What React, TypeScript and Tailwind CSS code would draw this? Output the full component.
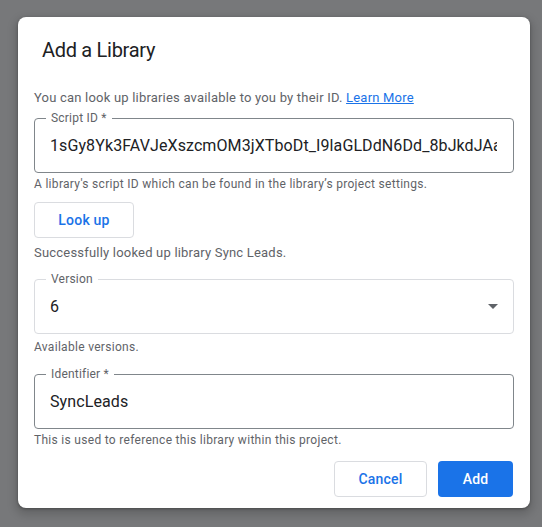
import React from "react";

function Outlined({
  label,
  dark,
  children,
  className = "",
}: {
  label: string;
  dark?: boolean;
  children: React.ReactNode;
  className?: string;
}) {
  return (
    <div
      className={`relative h-[55px] rounded-[4px] border ${
        dark ? "border-[#80868b]" : "border-[#dadce0]"
      } flex items-center pl-[15px] pr-4 ${className}`}
    >
      <span className="absolute left-[11px] top-[-9px] bg-white px-[5px] text-[12px] leading-4 tracking-[0.2px] text-[#5f6368]">
        {label}
      </span>
      {children}
    </div>
  );
}

export default function App() {
  return (
    <div
      className="min-h-[527px] bg-[#77787a] pt-[17px] pl-[18px]"
      style={{ fontFamily: "Roboto, 'Noto Sans', sans-serif" }}
    >
      <div className="w-[512px] h-[491px] bg-white rounded-[8px] shadow-[0_4px_8px_3px_rgba(0,0,0,0.15),0_1px_3px_rgba(0,0,0,0.3)] flex flex-col">
        <h2 className="pt-[21px] pl-6 text-[20px] leading-6 tracking-[-0.3px] text-[#202124] font-normal">
          Add a Library
        </h2>
        <div className="px-4 flex flex-col">
          <p className="mt-[26px] text-[13px] leading-5 tracking-[0.2px] text-[#5f6368]">
            You can look up libraries available to you by their ID.{" "}
            <a className="text-[#1a73e8] underline" href="#">
              Learn More
            </a>
          </p>
          <Outlined label="Script ID *" dark className="mt-[10px]">
            <div className="overflow-hidden whitespace-nowrap text-[16px] leading-6 tracking-[0.1px] text-[#202124] w-full">
              1sGy8Yk3FAVJeXszcmOM3jXTboDt_I9laGLDdN6Dd_8bJkdJAaY4
            </div>
          </Outlined>
          <p className="mt-[3px] text-[12px] leading-4 tracking-[0.3px] text-[#5f6368]">
            A library's script ID which can be found in the library’s project settings.
          </p>
          <div className="mt-[10px]">
            <button className="w-[100px] h-[36px] rounded-[4px] border border-[#dadce0] text-[14px] font-medium tracking-[0.2px] text-[#1a73e8] bg-white">
              Look up
            </button>
          </div>
          <p className="mt-[5px] text-[13px] leading-5 tracking-[0.2px] text-[#5f6368]">
            Successfully looked up library Sync Leads.
          </p>
          <Outlined label="Version" className="mt-[16px]">
            <div className="flex-1 text-[16px] leading-6 text-[#202124]">6</div>
            <svg width="10" height="5" viewBox="0 0 10 5" className="mr-[-1px]">
              <path d="M0 0 L10 0 L5 5 Z" fill="#5f6368" />
            </svg>
          </Outlined>
          <p className="mt-[5px] text-[12px] leading-4 tracking-[0.3px] text-[#5f6368]">
            Available versions.
          </p>
          <Outlined label="Identifier *" dark className="mt-[19px]">
            <div className="text-[16px] leading-6 tracking-[0.1px] text-[#202124]">SyncLeads</div>
          </Outlined>
          <p className="mt-[3px] text-[12px] leading-4 tracking-[0.3px] text-[#5f6368]">
            This is used to reference this library within this project.
          </p>
          <div className="mt-[13px] pr-[1px] flex justify-end gap-[11px]">
            <button className="w-[93px] h-[36px] rounded-[4px] border border-[#dadce0] bg-white text-[14px] font-medium tracking-[0.2px] text-[#1a73e8]">
              Cancel
            </button>
            <button className="w-[75px] h-[36px] rounded-[4px] bg-[#1a73e8] text-[14px] font-medium tracking-[0.2px] text-white">
              Add
            </button>
          </div>
        </div>
      </div>
    </div>
  );
}
